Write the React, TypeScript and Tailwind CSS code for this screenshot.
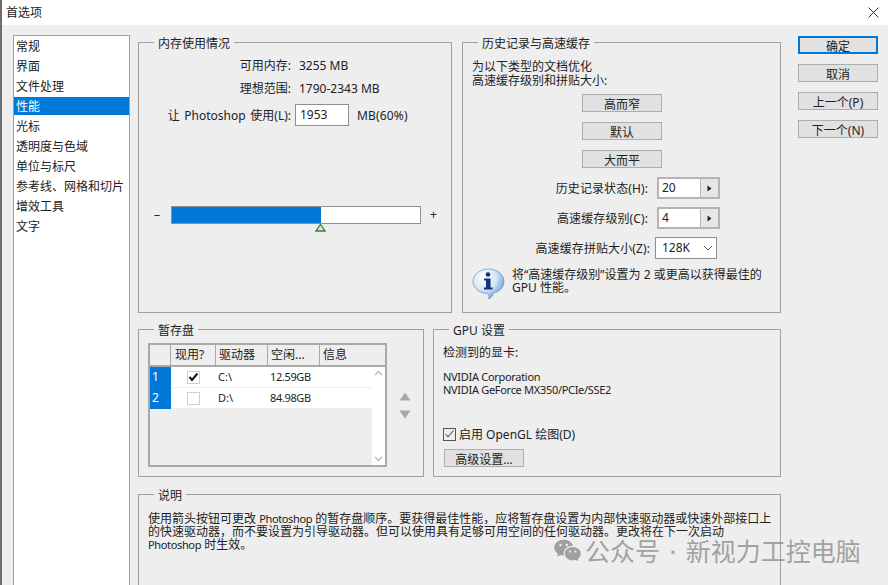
import React from "react";
import { RiWechatFill } from "react-icons/ri";

const font = { fontFamily: '"Noto Sans","Noto Sans CJK SC",sans-serif' };

function Panel({ title, legendLeft, className, children }: { title: string; legendLeft: string; className: string; children: React.ReactNode }) {
  return (
    <div className={`relative border border-[#a0a0a0] ${className}`}>
      <div className={`absolute top-[-8px] ${legendLeft} bg-[#eeeeee] px-[4px] h-[16px] leading-[18px] text-[12px] text-[#222]`}>{title}</div>
      {children}
    </div>
  );
}

function Btn({ children, primary, className = "" }: { children: React.ReactNode; primary?: boolean; className?: string }) {
  return (
    <div className={`w-[80px] h-[18px] flex items-center justify-center bg-[#e1e1e1] text-[12px] text-[#222] leading-none pt-[3px] ${primary ? "border-2 border-[#0078d7]" : "border border-[#adadad]"} ${className}`}>
      {children}
    </div>
  );
}

function Spinner({ value, label }: { value: string; label: string }) {
  return (
    <div className="flex items-center justify-end h-[22px] mb-[8px] w-[247px]">
      <span className="text-[12px] text-[#222] mr-[9px] mt-[2px] tracking-[0.1px]">{label}</span>
      <div className="w-[63px] h-[22px] border-2 border-[#b4b4b4] flex bg-white -mr-[1px]">
        <div className="w-[41px] text-[12px] leading-[18px] pl-[3px] text-[#222]">{value}</div>
        <div className="flex-1 bg-[#e6e6e6] border-l border-[#b4b4b4] flex items-center justify-center">
          <svg width="5" height="7" viewBox="0 0 5 7"><path d="M0.5 0.5 L4.5 3.5 L0.5 6.5 Z" fill="#222" /></svg>
        </div>
      </div>
    </div>
  );
}

function InfoIcon() {
  return (
    <svg width="33" height="32" viewBox="0 0 33 32" className="shrink-0">
      <defs>
        <radialGradient id="ib" cx="0.35" cy="0.3" r="0.8">
          <stop offset="0" stopColor="#ffffff" />
          <stop offset="0.5" stopColor="#d5e6f7" />
          <stop offset="1" stopColor="#4f8fd0" />
        </radialGradient>
      </defs>
      <path d="M16.5 1 C25 1 32 6.5 32 13.5 C32 19.5 27 24 21.5 25 C21 27 19.5 30 16.5 31 C17.5 29 17 26.5 16 25.5 C7.5 25.5 1 20 1 13.5 C1 6.5 8 1 16.5 1 Z" fill="url(#ib)" stroke="#6b9bcc" strokeWidth="0.8" />
      <circle cx="16" cy="6.5" r="2.3" fill="#17307e" />
      <path d="M12 10.5 H18.5 V19.5 H20.5 V21.5 H12 V19.5 H14 V12.5 H12 Z" fill="#17307e" />
    </svg>
  );
}

const items = ["常规", "界面", "文件处理", "性能", "光标", "透明度与色域", "单位与标尺", "参考线、网格和切片", "增效工具", "文字"];

export default function App() {
  return (
    <div style={font} className="relative w-[888px] h-[585px] overflow-hidden bg-[#eeeeee] border-l-2 border-[#6e6e6e] flex flex-col text-[#222]">
      <div className="h-[25px] shrink-0 bg-white flex items-center justify-between pl-[4px] pr-[9px]">
        <span className="text-[12px] leading-none">首选项</span>
        <svg width="11" height="11" viewBox="0 0 11 11"><path d="M0.5 0.5 L10.5 10.5 M10.5 0.5 L0.5 10.5" stroke="#333" strokeWidth="1" /></svg>
      </div>
      <div className="flex flex-1 pl-[11px] pt-[10px]">
        <div className="w-[117px] h-[560px] bg-white border border-[#a0a0a0] pt-[1px] shrink-0">
          {items.map((t) => (
            <div key={t} className={`h-[18px] mb-[2px] pl-[2px] text-[12px] leading-[19px] whitespace-nowrap ${t === "性能" ? "bg-[#0078d7] text-white" : "text-[#222]"}`}>{t}</div>
          ))}
        </div>

        <div className="ml-[8px] w-[643px] pt-[7px] shrink-0 flex flex-col">
          <div className="flex h-[271px] gap-[10px]">
            <Panel title="内存使用情况" legendLeft="left-[15px]" className="w-[314px] pt-[14px]">
              <div className="flex h-[18px] items-center text-[12px]">
                <span className="w-[152px] text-right">可用内存:</span>
                <span className="ml-[8px]">3255 MB</span>
              </div>
              <div className="flex h-[18px] items-center text-[12px] mt-[5px]">
                <span className="w-[152px] text-right">理想范围:</span>
                <span className="ml-[8px]">1790-2343 MB</span>
              </div>
              <div className="flex h-[22px] items-center text-[12px] mt-[6px]">
                <span className="w-[152px] text-right whitespace-nowrap mt-[2px] [word-spacing:1.5px]">让 Photoshop 使用(L):</span>
                <div className="ml-[4px] w-[54px] h-[22px] border border-[#8f8f8f] bg-white pl-[4px] leading-[20px]">1953</div>
                <span className="ml-[8px] mt-[1px] tracking-[0.15px]">MB(60%)</span>
              </div>
              <div className="flex items-center mt-[80px] h-[18px] text-[12px] pl-[15px]">
                <span className="w-[17px] leading-none">–</span>
                <div className="relative w-[250px] h-[18px] border border-[#8f8f8f] bg-white">
                  <div className="w-[149px] h-full bg-[#0078d7]" />
                  <svg width="11" height="8" viewBox="0 0 11 8" className="absolute left-[143px] top-[17px]">
                    <path d="M5.5 0.5 L10 7 H1 Z" fill="#dfeadf" stroke="#3b7d3b" strokeWidth="1.3" />
                  </svg>
                </div>
                <span className="ml-[9px] leading-none">+</span>
              </div>
            </Panel>

            <Panel title="历史记录与高速缓存" legendLeft="left-[15px]" className="w-[319px] pt-[16px] pl-[9px]">
              <div className="text-[12px] leading-[14px] pt-[1px]">为以下类型的文档优化<br />高速缓存级别和拼贴大小:</div>
              <div className="flex flex-col gap-[10px] mt-[6px] ml-[110px]">
                <Btn>高而窄</Btn>
                <Btn>默认</Btn>
                <Btn>大而平</Btn>
              </div>
              <div className="mt-[9px]">
                <Spinner label="历史记录状态(H):" value="20" />
                <Spinner label="高速缓存级别(C):" value="4" />
                <div className="flex items-center justify-end h-[22px] w-[245px]">
                  <span className="text-[12px] mr-[5px] mt-[2px] tracking-[0.1px]">高速缓存拼贴大小(Z):</span>
                  <div className="w-[62px] h-[22px] border border-[#8f8f8f] bg-white flex items-center justify-between pl-[6px] pr-[3px] text-[12px]">
                    128K
                    <svg width="10" height="6" viewBox="0 0 10 6"><path d="M1 1 L5 5 L9 1" fill="none" stroke="#666" strokeWidth="1" /></svg>
                  </div>
                </div>
              </div>
              <div className="flex mt-[9px]">
                <InfoIcon />
                <div className="ml-[7px] text-[12px] leading-[13px] whitespace-nowrap">将“高速缓存级别”设置为 2 或更高以获得最佳的<br />GPU 性能。</div>
              </div>
            </Panel>
          </div>

          <div className="flex h-[148px] mt-[16px] gap-[9px]">
            <Panel title="暂存盘" legendLeft="left-[15px]" className="w-[286px] pt-[14px] pl-[10px] flex">
              <div className="-mt-[1px] -ml-[1px] w-[239px] h-[124px] border-2 border-[#a9a9a9] flex flex-col shrink-0 bg-[#eeeeee]">
                <div className="h-[20px] flex text-[12px] leading-[19px] border-b-2 border-[#a9a9a9] box-content shrink-0">
                  <div className="w-[21px] border-r border-[#a9a9a9]" />
                  <div className="w-[45px] border-r border-[#a9a9a9] pl-[4px]">现用?</div>
                  <div className="w-[52px] border-r border-[#a9a9a9] pl-[3px]">驱动器</div>
                  <div className="w-[52px] border-r border-[#a9a9a9] pl-[3px]">空闲...</div>
                  <div className="flex-1 pl-[3px]">信息</div>
                </div>
                <div className="flex flex-1">
                  <div className="w-[222px]">
                    {[
                      ["1", "C:\\", "12.59GB", true],
                      ["2", "D:\\", "84.98GB", false],
                    ].map(([n, d, s, c]) => (
                      <div key={n as string} className="h-[21px] flex items-center text-[11px] bg-white border-b border-[#eeeeee]">
                        <div className="w-[21px] h-[21px] bg-[#0078d7] text-white pl-[2px] leading-[19px] text-[12px]">{n}</div>
                        <div className="w-[45px] flex justify-center">
                          <div className="w-[13px] h-[13px] border border-[#cfcfcf] bg-white flex items-center justify-center">
                            {c ? (
                              <svg width="11" height="10" viewBox="0 0 11 10"><path d="M1.5 5 L4 8 L9.5 1.5" fill="none" stroke="#111" strokeWidth="2" /></svg>
                            ) : null}
                          </div>
                        </div>
                        <div className="w-[52px] pl-[2px]">{d}</div>
                        <div className="pl-[2px] tracking-[-0.35px]">{s}</div>
                      </div>
                    ))}
                  </div>
                  <div className="flex-1 bg-white flex flex-col items-center justify-between py-[3px]">
                    <svg width="9" height="6" viewBox="0 0 9 6"><path d="M1 5 L4.5 1.5 L8 5" fill="none" stroke="#b5b5b5" strokeWidth="1.4" /></svg>
                    <svg width="9" height="6" viewBox="0 0 9 6"><path d="M1 1 L4.5 4.5 L8 1" fill="none" stroke="#b5b5b5" strokeWidth="1.4" /></svg>
                  </div>
                </div>
              </div>
              <div className="ml-[12px] mt-[48px] flex flex-col gap-[9px]">
                <svg width="12" height="9" viewBox="0 0 12 9"><path d="M6 0.5 L11.5 8.5 H0.5 Z" fill="#a8a8a8" /></svg>
                <svg width="12" height="9" viewBox="0 0 12 9"><path d="M0.5 0.5 H11.5 L6 8.5 Z" fill="#a8a8a8" /></svg>
              </div>
            </Panel>

            <Panel title="GPU 设置" legendLeft="left-[15px]" className="w-[348px] pl-[9px] pt-[14px]">
              <div className="text-[12px] leading-[18px]">检测到的显卡:</div>
              <div className="mt-[8px] text-[11px] leading-[13px] tracking-[-0.3px] whitespace-nowrap">NVIDIA Corporation<br />NVIDIA GeForce MX350/PCIe/SSE2</div>
              <div className="mt-[31px] flex items-center h-[14px] text-[12px]">
                <div className="w-[13px] h-[13px] border border-[#555] bg-[#eeeeee] flex items-center justify-center">
                  <svg width="11" height="10" viewBox="0 0 11 10"><path d="M1.5 5 L4 8 L9.5 1.5" fill="none" stroke="#333" strokeWidth="1" /></svg>
                </div>
                <span className="ml-[3px] whitespace-nowrap mt-[1px]">启用 OpenGL 绘图(D)</span>
              </div>
              <Btn className="mt-[8px] ml-[1px]">高级设置...</Btn>
            </Panel>
          </div>

          <Panel title="说明" legendLeft="left-[15px]" className="mt-[17px] h-[110px] pl-[9px] pt-[17px]">
            <div className="text-[12px] leading-[13px] whitespace-nowrap">
              使用箭头按钮可更改 <span className="text-[11px] tracking-[-0.35px]">Photoshop</span> 的暂存盘顺序。要获得最佳性能{"\uFF0C"}应将暂存盘设置为内部快速驱动器或快速外部接口上<br />
              的快速驱动器{"\uFF0C"}而不要设置为引导驱动器。但可以使用具有足够可用空间的任何驱动器。更改将在下一次启动<br />
              <span className="text-[11px] tracking-[-0.35px]">Photoshop</span> 时生效。
            </div>
          </Panel>
        </div>

        <div className="ml-[17px] pt-[1px] flex flex-col gap-[10px]">
          <Btn primary>确定</Btn>
          <Btn>取消</Btn>
          <Btn>上一个(P)</Btn>
          <Btn>下一个(N)</Btn>
        </div>
      </div>

      <div className="absolute left-[551px] top-[536px] flex items-center text-[#8c8c8c]/80 text-[25px] leading-[28px] whitespace-nowrap [word-spacing:3px]">
        <RiWechatFill size={29} className="mr-[3px] text-[#a0a0a0]" />
        <span>公众号 · 新视力工控电脑</span>
      </div>
    </div>
  );
}
